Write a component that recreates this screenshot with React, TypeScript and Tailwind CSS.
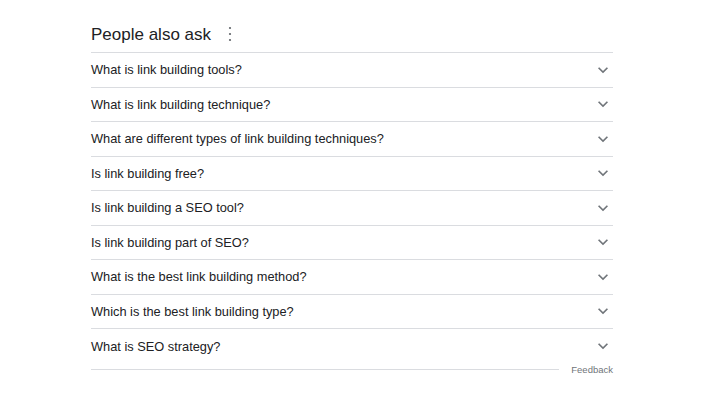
import React from 'react';

const questions = [
  'What is link building tools?',
  'What is link building technique?',
  'What are different types of link building techniques?',
  'Is link building free?',
  'Is link building a SEO tool?',
  'Is link building part of SEO?',
  'What is the best link building method?',
  'Which is the best link building type?',
  'What is SEO strategy?',
];

const Chevron = () => (
  <svg width="20" height="20" viewBox="0 0 24 24" className="text-[#70757a] shrink-0">
    <path fill="currentColor" d="M7.41 8.59L12 13.17l4.59-4.58L18 10l-6 6-6-6 1.41-1.41z" />
  </svg>
);

const MoreVert = () => (
  <svg width="6" height="18" viewBox="0 0 6 18" className="text-[#5f6368]">
    <circle cx="3" cy="3" r="1.1" fill="currentColor" />
    <circle cx="3" cy="9" r="1.1" fill="currentColor" />
    <circle cx="3" cy="15" r="1.1" fill="currentColor" />
  </svg>
);

export default function App() {
  return (
    <div className="w-[719px] h-[400px] bg-white" style={{ fontFamily: '"Liberation Sans", Arial, sans-serif' }}>
      <div className="ml-[91px] w-[522px] pt-[18px]">
        <div className="flex items-center h-[34px] pb-[2px]">
          <h2 className="text-[17px] text-[#202124] leading-none">People also ask</h2>
          <div className="ml-[16px] flex items-center">
            <MoreVert />
          </div>
        </div>

        <div className="border-t border-[#dadce0]">
          {questions.map((q, i) => (
            <div
              key={q}
              className={`flex items-center justify-between h-[34.5px] ${
                i < questions.length - 1 ? 'border-b border-[#dadce0]' : ''
              }`}
            >
              <span className="text-[12.8px] text-[#202124]">{q}</span>
              <Chevron />
            </div>
          ))}
        </div>

        <div className="flex items-center mt-[1px]">
          <div className="flex-1 border-t border-[#dadce0]" />
          <span className="ml-[12px] text-[9.5px] text-[#70757a] leading-none">Feedback</span>
        </div>
      </div>
    </div>
  );
}
